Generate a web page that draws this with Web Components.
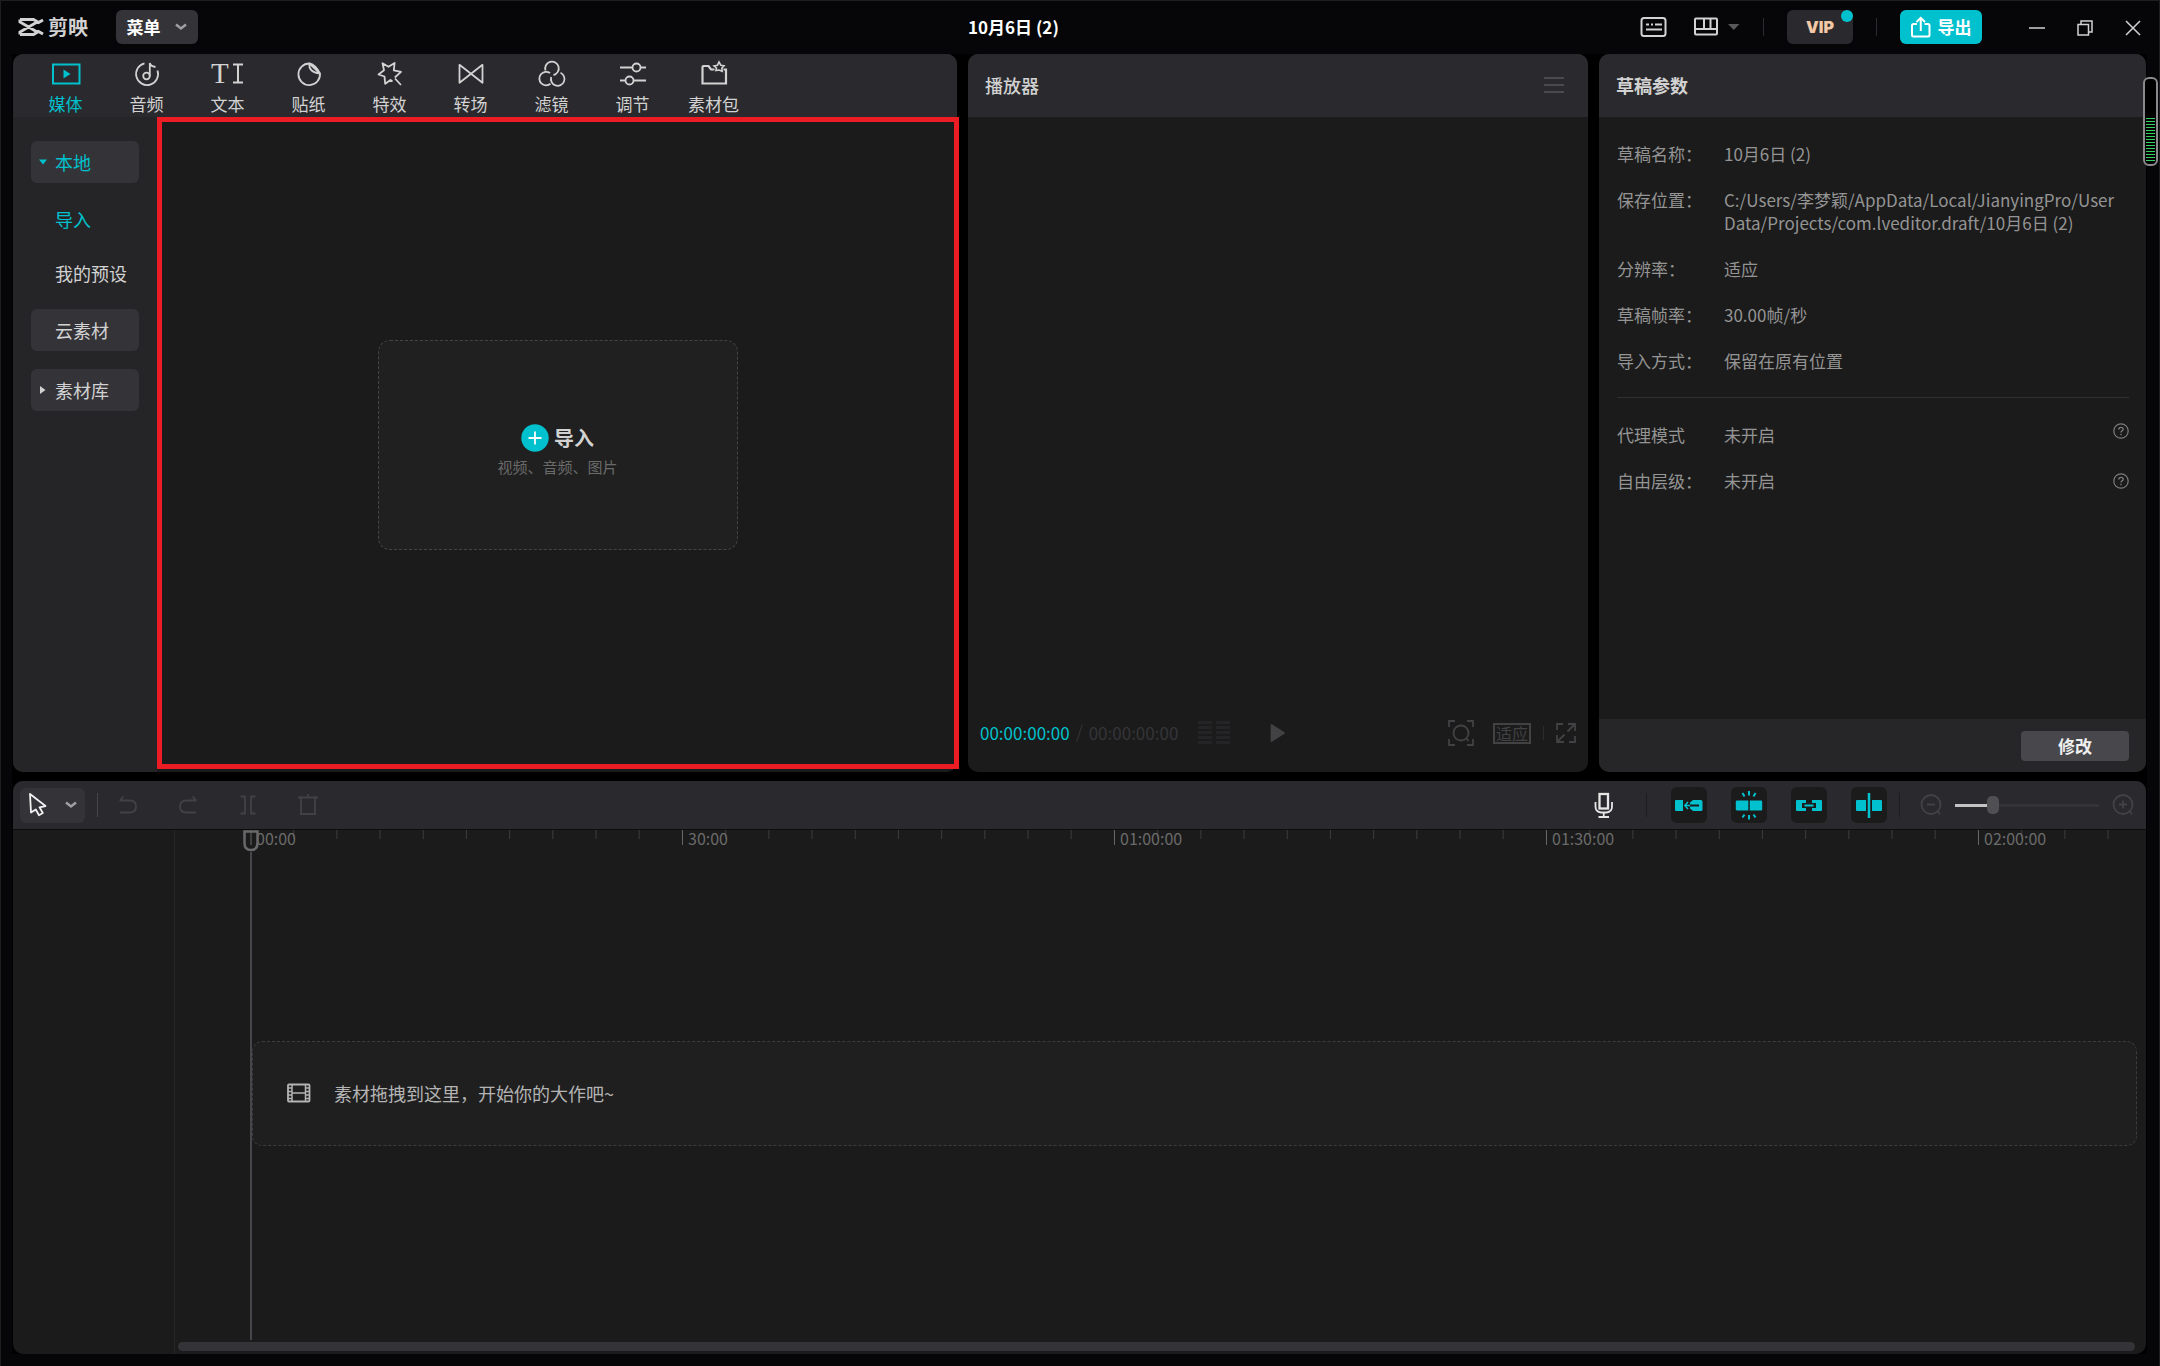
<!DOCTYPE html>
<html lang="zh-CN">
<head>
<meta charset="utf-8">
<title>剪映 - 10月6日 (2)</title>
<style>
  html, body { height: 100%; }
  body {
    margin: 0;
    background: #060608;
    --accent: #00c1cd;
    --head: #2a2a2e;
    --panel: #1b1b1b;
    --chip: #343338;
    --text: #d2d2d2;
    --muted: #949494;
    --dim: #424245;
    color: var(--text);
    font: 17px/22px "Noto Sans CJK SC", "Open Sans", sans-serif;
  }
</style>
</head>
<body>
<jy-app></jy-app>
<script>
const RESET = `
  *, *::before, *::after { box-sizing: border-box; }
  button { font: inherit; color: inherit; background: none; border: 0; padding: 0; margin: 0;
    display: inline-flex; align-items: center; justify-content: center; cursor: pointer; }
  jy-icon { flex: none; }
`;
function define(name, css, html, setup) {
  const tpl = document.createElement('template');
  tpl.innerHTML = `<style>${RESET}${css}</style>${html}`;
  customElements.define(name, class extends HTMLElement {
    connectedCallback() {
      if (this.shadowRoot) return;
      this.attachShadow({ mode: 'open' }).append(tpl.content.cloneNode(true));
      if (setup) setup(this, this.shadowRoot);
    }
  });
}

/* Icon set: [width, height, markup]; strokes use currentColor */
const ICONS = {
  logo: [26, 22, `<path d="M2 3.5H15.5L20.500 6.500 25 4M2 3.500V6L20 16.500M2 18.500H15.500L20.500 15.500 25 18M2 18.500V16L20 5.500" stroke-width="3"/>`],
  chevron: [14, 8, `<path d="M2 1.500 7 5.500 12 1.500" stroke-width="2.500"/>`],
  captions: [28, 22, `<rect x="1.500" y="2" width="24" height="18" rx="2.500" stroke-width="2"/><path d="M6 8.500h3M11 8.500h2M15 8.500h7M6 13.500h16" stroke-width="2"/>`],
  layout: [24, 20, `<rect x="1" y="1.500" width="22" height="16" rx="1" stroke-width="2"/><path d="M1 12H23M10 2V12M16.500 2V12" stroke-width="2"/>`],
  caret: [12, 8, `<path d="M0 1H11.500L5.750 7z" fill="currentColor" stroke="none"/>`],
  share: [20, 22, `<path d="M6 8H2.500Q1 8 1 9.500V19Q1 20.500 2.500 20.500H17Q18.500 20.500 18.500 19V9.500Q18.500 8 17 8H13.500M9.750 15V2M5.500 6 9.750 1.800 14 6" stroke-width="2"/>`],
  min: [16, 16, `<path d="M0 8H16" stroke-width="1.500"/>`],
  restore: [16, 16, `<path d="M1 4.500H11.500V15H1zM4 4.500V1H15V12H11.500" stroke-width="1.500"/>`],
  close: [16, 16, `<path d="M1 1 15 15M15 1 1 15" stroke-width="1.500"/>`],
  media: [30, 28, `<rect x="2" y="4.500" width="26.500" height="19" stroke-width="2"/><path d="M12.500 9.500 19.500 14 12.500 18.500z" fill="currentColor" stroke="none"/>`],
  audio: [30, 28, `<path d="M12.500 3.300A11 11 0 1 0 25.500 10.500M17.800 16V3Q18.500 6.300 23.500 7"/><circle cx="14.500" cy="16" r="3.300"/>`],
  text: [34, 28, `<text x="0" y="23" font-family="Liberation Serif, serif" font-size="29" fill="currentColor" stroke="none">T</text><path d="M22 4.500H32M27 4.500V22.500M22 22.500H32" stroke-width="2"/>`],
  sticker: [30, 28, `<path d="M15.500 3.500A10.800 10.800 0 1 0 26 13.500L15.500 3.500Q14 12 26 13.500M15.500 3.500Q21 4.500 26 13.500"/>`],
  effects: [30, 28, `<path d="M19.800 17.500 26 11.800 18.800 10.300 19.600 3 13.500 6.800 7.500 3.300 9 10.300 3.500 14.500 9.500 16.500 10.200 23.800 15.500 20 17.500 21.500M20 18.500 26 25" stroke-linejoin="round"/>`],
  transition: [30, 28, `<path d="M3.500 4.800 26.500 22.800V4.800L3.500 22.800z" stroke-linejoin="round"/>`],
  filter: [30, 28, `<path d="M8.500 10.500A6.800 6.800 0 1 1 16.500 15M13 13A6.800 6.800 0 1 0 13.500 23.800M23.500 12.800A6.800 6.800 0 1 1 14.200 17"/>`],
  adjust: [30, 28, `<path d="M2 7.500H14.500M22.500 7.500H28M2 20.500H7.500M15.500 20.500H28"/><circle cx="18.500" cy="7.500" r="4"/><circle cx="11.500" cy="20.500" r="4"/>`],
  pack: [30, 28, `<path d="M15.500 9.500 12 9.500 9.500 6H4.500Q3.500 6 3.500 7V23.500H27V9.500H24.500" stroke-width="2.200"/><path d="M17 10.500 17.500 8 15 6 18.500 5.200 20 2 21.800 5.200 25 5.800 22.800 8.200 23.200 11.300 20 10z" stroke-width="1.600"/>`],
  down: [10, 8, `<path d="M1 1.500H9L5 6.500z" fill="currentColor" stroke="none"/>`],
  right: [10, 10, `<path d="M2 1 7.500 5 2 9z" fill="currentColor" stroke="none"/>`],
  plus: [28, 28, `<circle cx="14" cy="14" r="13.700" fill="#00c1cd" stroke="none"/><path d="M7.500 14H20.500M14 7.500V20.500" stroke="#fff"/>`],
  menu: [20, 18, `<path d="M0 2H20M0 9H20M0 16H20"/>`],
  bars: [32, 24, `<path d="M0 1.500H14M18 1.500H32M0 6.500H14M18 6.500H32M0 11.500H14M18 11.500H32M0 16.500H14M18 16.500H32M0 21.500H14M18 21.500H32" stroke-width="3"/>`],
  play: [16, 20, `<path d="M1.500 2 14 10 1.500 18z" fill="currentColor" stroke-linejoin="round"/>`],
  focus: [26, 30, `<path d="M1 9V3H7M19 3H25V9M1 21V27H7M19 27H25V21M18 20 20.500 23"/><circle cx="13" cy="15" r="7.500"/>`],
  full: [20, 20, `<path d="M1 7V1H7M12 1H19V8M19 1 11.500 8.500M1 12V19H8M1 19 8.500 11.500M13 19H19V13"/>`],
  help: [16, 16, `<circle cx="8" cy="8" r="7.200" stroke-width="1.200"/><path d="M5.800 6.500Q5.800 4.300 8 4.300T10.200 6.300Q10.200 7.300 9 7.900 8 8.400 8 9.600M8 10.800V12.200" stroke-width="1.300"/>`],
  cursor: [20, 26, `<path d="M2 2 17.500 14 11.500 15.300 14.800 21 11 23.200 7.800 17.500 3 20.500z" stroke-linejoin="round"/>`],
  undo: [18, 20, `<path d="M.500 5.500H10.500Q17 5.500 17 11.500 17 17.500 10.500 17.500H1M4.500 1.500.800 5.500"/>`],
  redo: [18, 20, `<path d="M17.500 5.500H7.500Q1 5.500 1 11.500 1 17.500 7.500 17.500H17M13.500 1.500 17.200 5.500"/>`],
  split: [16, 20, `<path d="M.500 1.500H5V18.500H.500M15.500 1.500H11V18.500H15.500"/>`],
  trash: [20, 22, `<path d="M0 3.500H20M10 0V3.500M3 3.500V20H17V3.500"/>`],
  mic: [20, 26, `<rect x="5.500" y="2" width="8.500" height="14.500" stroke-width="2.300"/><path d="M1.500 10V14.500Q1.500 20 7 20.500H12.500Q18 20 18 14.500V10M9.750 20.500V24.500M4.500 25H15"/>`],
  snap: [30, 28, `<path d="M2 9H9V20H2Q1 20 1 19V10Q1 9 2 9zM16 11.500 19 9H27Q28.500 9 28.500 10.500V18.500Q28.500 20 27 20H19L16 17.500V15.500H25V13.500H16z" fill="currentColor" stroke="none"/><path d="M16 14.500H11M14 11 10.800 14.500 14 18" stroke-width="1.500"/>`],
  burst: [30, 30, `<path d="M3 10.500H14.300V20.500H3Q1.800 20.500 1.800 19.500V11.500Q1.800 10.500 3 10.500zM15.800 10.500H27Q28.200 10.500 28.200 11.500V19.500Q28.200 20.500 27 20.500H15.800z" fill="currentColor" stroke="none"/><path d="M15 1V5.500M15 25V29.500M8.500 3 10.500 6.500M21.500 3 19.500 6.500M8.500 27.500 10.500 24.500M21.500 27.500 19.500 24.500" stroke-width="2"/>`],
  link: [30, 28, `<path d="M3 9H12V12H8V17H12V20H3Q2 20 2 19V10Q2 9 3 9zM18 9H27Q28 9 28 10V19Q28 20 27 20H18V17H22V12H18z" fill="currentColor" stroke="none"/><path d="M10.500 14.500H19.500"/>`],
  align: [30, 28, `<path d="M3 9H12V20H3Q2 20 2 19V10Q2 9 3 9zM18 9H27Q28 9 28 10V19Q28 20 27 20H18z" fill="currentColor" stroke="none"/><path d="M15 2V27" stroke-width="2.500"/>`],
  zoomout: [22, 24, `<circle cx="11" cy="11.500" r="9.500"/><path d="M7 11.500H15M17 18 20 21"/>`],
  zoomin: [22, 24, `<circle cx="11" cy="11.500" r="9.500"/><path d="M7 11.500H15M11 7.500V15.500M17 18 20 21"/>`],
  film: [24, 20, `<rect x="1" y="1.500" width="21.500" height="17" rx="1"/><path d="M5 1.500V18.500M18.500 1.500V18.500M5 10H18.500M1 5H5M1 8.500H5M1 12H5M1 15.500H5M18.500 5H22.500M18.500 8.500H22.500M18.500 12H22.500M18.500 15.500H22.500" stroke-width="1.500"/>`],
  head: [16, 22, `<path d="M1.500 1.500H14.500V13Q14.500 20 8 20 1.500 20 1.500 13z" stroke-width="2.500" fill="#1b1b1b"/><path d="M8 2V15" stroke-width="1"/>`]
};
define('jy-icon', `:host { display: inline-flex; } svg { display: block; }`, ``, (host, root) => {
  const [w, h, body] = ICONS[host.getAttribute('name')];
  root.innerHTML += `<svg width="${w}" height="${h}" viewBox="0 0 ${w} ${h}" fill="none" stroke="currentColor" stroke-width="1.800" aria-hidden="true">${body}</svg>`;
});

define('jy-titlebar', `
  :host { display: grid; grid-template-columns: var(--cols); column-gap: 11px; align-items: center; height: 53px; padding: 0 13px 2px 12px; }
  .left, .right { display: flex; align-items: center; }
  .left { padding-left: 5px; }
  .brand { display: flex; align-items: center; gap: 4px; font-size: 20px; font-weight: 700; }
  .menu { margin-left: 28px; width: 82px; height: 34px; border-radius: 6px; background: var(--chip); color: #fff; font-weight: 700; gap: 13px; }
  .menu jy-icon { color: #a0a0a0; }
  h1 { margin: 0; font-size: 17px; line-height: 22px; font-weight: 700; color: #fff; }
  .right { justify-content: flex-end; padding-right: 5px; white-space: nowrap; }
  .layout { margin-left: 26px; gap: 10px; }
  .layout jy-icon + jy-icon { color: #58585a; }
  .sep { width: 1px; height: 18px; background: #2c2c30; margin: 0 23px; }
  .vip { position: relative; width: 66px; height: 34px; border-radius: 6px; background: #2a2a2e; color: #f3c8a6; font: 900 16px/20px Inter, sans-serif; }
  .vip i { position: absolute; top: 0; right: 0; width: 12px; height: 12px; border-radius: 50%; background: var(--accent); }
  .export { width: 82px; height: 34px; border-radius: 6px; background: var(--accent); color: #fff; font-weight: 700; gap: 7px; }
  .win { display: flex; gap: 32px; margin-left: 47px; padding-top: 2px; }
`, `
  <div class="left"><span class="brand"><jy-icon name="logo"></jy-icon>剪映</span>
    <button class="menu">菜单<jy-icon name="chevron"></jy-icon></button></div>
  <h1>10月6日 (2)</h1>
  <div class="right">
    <button aria-label="字幕"><jy-icon name="captions"></jy-icon></button>
    <button class="layout" aria-label="布局"><jy-icon name="layout"></jy-icon><jy-icon name="caret"></jy-icon></button>
    <span class="sep"></span>
    <button class="vip">VIP<i></i></button>
    <span class="sep"></span>
    <button class="export"><jy-icon name="share"></jy-icon>导出</button>
    <span class="win"><button aria-label="最小化"><jy-icon name="min"></jy-icon></button><button aria-label="还原"><jy-icon name="restore"></jy-icon></button><button aria-label="关闭"><jy-icon name="close"></jy-icon></button></span>
  </div>
`);

define('jy-tab', `
  :host { display: block; width: 81px; }
  button { width: 100%; flex-direction: column; gap: 5px; white-space: nowrap; }
  :host([active]) { color: var(--accent); }
`, `<button><slot></slot></button>`, (host, root) => {
  const icon = document.createElement('jy-icon');
  icon.setAttribute('name', host.getAttribute('icon'));
  root.querySelector('button').prepend(icon);
});

define('jy-nav-item', `
  :host { display: block; font-size: 18px; }
  button { width: 100%; height: 54px; justify-content: flex-start; border-radius: 6px; }
  .mark { width: 24px; display: flex; justify-content: center; }
  :host([group]) button { height: 42px; background: var(--chip); }
  :host([active]) { color: var(--accent); }
`, `<button><span class="mark"><slot name="mark"></slot></span><slot></slot></button>`);

define('jy-media', `
  :host { display: flex; flex-direction: column; background: var(--panel); border-radius: 10px; overflow: hidden; }
  nav { display: flex; height: 63px; padding: 6px 0 0 12px; background: var(--head); }
  .body { flex: 1; display: flex; min-height: 0; }
  aside { width: 144px; padding: 24px 18px; background: #252527; }
  .sub { padding: 9px 0; }
  .lib { margin-top: 18px; }
  main { flex: 1; display: flex; align-items: center; justify-content: center; padding: 1px 0 0 1px; }
  .drop { width: 360px; height: 210px; border: 1px dashed #444; border-radius: 12px; background: #202020; flex-direction: column; gap: 4px; padding-top: 12px; }
  .drop b { display: flex; align-items: center; gap: 5px; font-size: 20px; line-height: 28px; }
  .drop small { font-size: 15px; color: #6a6a6a; }
`, `
  <nav>
    <jy-tab icon="media" active>媒体</jy-tab><jy-tab icon="audio">音频</jy-tab><jy-tab icon="text">文本</jy-tab>
    <jy-tab icon="sticker">贴纸</jy-tab><jy-tab icon="effects">特效</jy-tab><jy-tab icon="transition">转场</jy-tab>
    <jy-tab icon="filter">滤镜</jy-tab><jy-tab icon="adjust">调节</jy-tab><jy-tab icon="pack">素材包</jy-tab>
  </nav>
  <div class="body">
    <aside>
      <jy-nav-item group active><jy-icon slot="mark" name="down"></jy-icon>本地</jy-nav-item>
      <div class="sub"><jy-nav-item active>导入</jy-nav-item><jy-nav-item>我的预设</jy-nav-item></div>
      <jy-nav-item group>云素材</jy-nav-item>
      <jy-nav-item class="lib" group><jy-icon slot="mark" name="right"></jy-icon>素材库</jy-nav-item>
    </aside>
    <main><button class="drop"><b><jy-icon name="plus"></jy-icon>导入</b><small>视频、音频、图片</small></button></main>
  </div>
`);

define('jy-panel', `
  :host { display: flex; flex-direction: column; background: var(--panel); border-radius: 10px; overflow: hidden; min-width: 0; }
  header { display: flex; align-items: center; justify-content: space-between; height: 63px; padding: 0 24px 2px 17px; background: var(--head); }
  h2 { margin: 0; font-size: 18px; line-height: 24px; font-weight: 500; }
  :host([strong]) h2 { font-weight: 700; }
  .body { flex: 1; display: flex; flex-direction: column; min-height: 0; }
`, `<header><h2></h2><slot name="action"></slot></header><div class="body"><slot></slot></div>`, (host, root) => {
  root.querySelector('h2').textContent = host.getAttribute('heading');
});

define('jy-player', `
  :host { display: flex; min-width: 0; }
  jy-panel { flex: 1; }
  .action { color: #4b4b4f; }
  .screen { flex: 1; }
  .bar { display: grid; grid-template-columns: 1fr auto 1fr; align-items: center; height: 78px; padding: 0 12px; color: var(--dim); }
  .time, .tools { display: flex; align-items: center; }
  .time { color: #353538; }
  .time b { font-weight: 400; color: var(--accent); }
  .time i { width: 1px; height: 18px; background: currentColor; transform: rotate(18deg); margin: 0 9px; }
  .time jy-icon { margin-left: 20px; color: #242426; }
  .tools { justify-content: flex-end; }
  .fit { width: 38px; height: 21px; border: 2px solid; font-size: 16px; line-height: 16px; margin-left: 19px; }
  .sep { width: 1px; height: 14px; background: #2c2c30; margin: 0 12px; }
`, `
  <jy-panel heading="播放器">
    <button class="action" slot="action" aria-label="菜单"><jy-icon name="menu"></jy-icon></button>
    <div class="screen"></div>
    <div class="bar">
      <div class="time"><b>00:00:00:00</b><i></i><span>00:00:00:00</span><jy-icon name="bars"></jy-icon></div>
      <button aria-label="播放"><jy-icon name="play"></jy-icon></button>
      <div class="tools"><button aria-label="缩放"><jy-icon name="focus"></jy-icon></button><button class="fit">适应</button><span class="sep"></span><button aria-label="全屏"><jy-icon name="full"></jy-icon></button></div>
    </div>
  </jy-panel>
`);

define('jy-field', `
  :host { display: flex; line-height: 23px; color: var(--muted); }
  .label { flex: none; width: 107px; }
  .value { flex: 1; min-width: 0; }
`, `<span class="label"></span><span class="value"><slot></slot></span><slot name="help"></slot>`, (host, root) => {
  root.querySelector('.label').textContent = host.getAttribute('label');
});

define('jy-params', `
  :host { display: flex; min-width: 0; }
  jy-panel { flex: 1; }
  .list { flex: 1; display: flex; flex-direction: column; gap: 23px; padding: 25px 17px 25px 18px; }
  hr { width: 100%; height: 1px; border: 0; margin: 2px 0; background: #303032; }
  .help { color: #7c7c7c; align-self: flex-start; }
  .mid { align-self: center; }
  footer { display: flex; justify-content: flex-end; align-items: center; height: 53px; padding: 0 17px; background: #262628; }
  footer button { width: 108px; height: 30px; border-radius: 4px; background: #47474c; color: #f0f0f0; font-weight: 700; }
`, `
  <jy-panel heading="草稿参数" strong>
    <div class="list">
      <jy-field label="草稿名称：">10月6日 (2)</jy-field>
      <jy-field label="保存位置：">C:/Users/李梦颖/AppData/Local/JianyingPro/User Data/Projects/com.lveditor.draft/10月6日 (2)</jy-field>
      <jy-field label="分辨率：">适应</jy-field>
      <jy-field label="草稿帧率：">30.00帧/秒</jy-field>
      <jy-field label="导入方式：">保留在原有位置</jy-field>
      <hr>
      <jy-field label="代理模式">未开启<button class="help" slot="help" aria-label="说明"><jy-icon name="help"></jy-icon></button></jy-field>
      <jy-field label="自由层级：">未开启<button class="help mid" slot="help" aria-label="说明"><jy-icon name="help"></jy-icon></button></jy-field>
    </div>
    <footer><button>修改</button></footer>
  </jy-panel>
`);

define('jy-toolbar', `
  :host { display: flex; align-items: center; justify-content: space-between; height: 49px; padding: 0 12px 0 7px; background: var(--head); border-bottom: 1px solid #0c0c0d; }
  div { display: flex; align-items: center; }
  .pick { width: 65px; height: 35px; border-radius: 6px; background: var(--chip); color: #f0f0f0; gap: 16px; }
  .pick jy-icon + jy-icon { color: #a0a0a0; }
  .sep { width: 1px; height: 24px; background: #46464a; }
  .sep.first { margin-left: 12px; }
  .sep.dark { background: #1d1d20; }
  .edit button { width: 60px; color: var(--dim); }
  .mic { color: #e6e6e6; margin-right: 32px; }
  .toggles { gap: 24px; margin: 0 12px 0 24px; }
  .toggles button { width: 36px; height: 36px; border-radius: 6px; background: #1b1b1c; color: var(--accent); }
  .zoom { gap: 13px; margin-left: 20px; color: var(--dim); }
  input { appearance: none; width: 144px; height: 18px; margin: 0; background: linear-gradient(to right, #c4c4c4 24%, #343438 24%) center / 100% 3px no-repeat; }
  input::-webkit-slider-thumb { appearance: none; width: 12px; height: 18px; border-radius: 5px; background: #505052; }
`, `
  <div>
    <button class="pick" aria-label="选择"><jy-icon name="cursor"></jy-icon><jy-icon name="chevron"></jy-icon></button>
    <span class="sep first"></span>
    <div class="edit"><button aria-label="撤销"><jy-icon name="undo"></jy-icon></button><button aria-label="恢复"><jy-icon name="redo"></jy-icon></button><button aria-label="分割"><jy-icon name="split"></jy-icon></button><button aria-label="删除"><jy-icon name="trash"></jy-icon></button></div>
  </div>
  <div>
    <button class="mic" aria-label="录音"><jy-icon name="mic"></jy-icon></button><span class="sep dark"></span>
    <div class="toggles"><button aria-label="主轨磁吸"><jy-icon name="snap"></jy-icon></button><button aria-label="自动吸附"><jy-icon name="burst"></jy-icon></button><button aria-label="联动"><jy-icon name="link"></jy-icon></button><button aria-label="预览轴"><jy-icon name="align"></jy-icon></button></div>
    <span class="sep dark"></span>
    <div class="zoom"><button aria-label="缩小"><jy-icon name="zoomout"></jy-icon></button><input type="range" min="0" max="100" value="24" aria-label="时间线缩放"><button aria-label="放大"><jy-icon name="zoomin"></jy-icon></button></div>
  </div>
`);

define('jy-ruler', `
  :host { display: flex; height: 24px; min-width: 0; font-size: 16px; line-height: 17px; color: #6a6a6a; }
  span { flex: none; width: 432px; background: linear-gradient(to right, #3c3c3f 1px, transparent 1px) 0 0 / 10% 9px repeat-x; }
  span::before { content: ""; display: inline-block; width: 1px; height: 15px; margin-right: 5px; background: #66666a; vertical-align: top; }
`, `<span>00:00</span><span>30:00</span><span>01:00:00</span><span>01:30:00</span><span>02:00:00</span>`);

define('jy-timeline', `
  :host { display: flex; flex-direction: column; background: var(--panel); border-radius: 10px; overflow: hidden; }
  .body { flex: 1; display: flex; min-height: 0; }
  .heads { width: 162px; border-right: 1px solid #262627; }
  .lanes { position: relative; flex: 1; min-width: 0; display: flex; flex-direction: column; padding-bottom: 3px; }
  jy-ruler { margin-left: 75px; }
  .track { flex: 1; display: flex; align-items: center; padding: 0 9px 10px 77px; }
  .drop { flex: 1; display: flex; align-items: center; gap: 23px; height: 105px; padding-left: 34px; border: 1px dashed #3c3c3d; border-radius: 10px; background: #1f1f1f; font-size: 18px; color: #b4b4b4; }
  .scroll { height: 9px; margin: 0 11px 0 3px; border-radius: 5px; background: #343338; }
  .playhead { position: absolute; top: 0; bottom: 14px; left: 68px; width: 16px; display: flex; flex-direction: column; align-items: center; color: #69696c; }
  .playhead::after { content: ""; flex: 1; width: 2px; background: #46464c; }
`, `
  <jy-toolbar></jy-toolbar>
  <div class="body">
    <div class="heads"></div>
    <div class="lanes">
      <jy-ruler></jy-ruler>
      <div class="track"><div class="drop"><jy-icon name="film"></jy-icon>素材拖拽到这里，开始你的大作吧~</div></div>
      <div class="scroll"></div>
      <div class="playhead"><jy-icon name="head"></jy-icon></div>
    </div>
  </div>
`);

define('jy-level', `
  :host { display: block; box-sizing: border-box; width: 15px; height: 89px; padding: 39px 1px 3px; border: 2px solid #8a8a8c; border-radius: 6px; background: #000; }
  div { height: 100%; background: repeating-linear-gradient(to bottom, #35d160 0 1px, transparent 1px 3px); }
`, `<div></div>`);

define('jy-app', `
  :host { --cols: minmax(0, 944fr) minmax(0, 620fr) minmax(0, 547fr); position: relative; display: flex; flex-direction: column; height: 100vh; box-sizing: border-box; border: 1px solid #1e1e20; border-bottom: 0; }
  .work { flex: 1; display: flex; flex-direction: column; gap: 9px; min-height: 0; margin: 0 12px 12px 11px; padding: 0 1px; background: #000; }
  .top { flex: 718; min-height: 0; display: grid; grid-template-columns: var(--cols); column-gap: 11px; }
  jy-timeline { flex: 573; min-height: 0; }
  .mark { position: absolute; left: 156px; top: 116px; right: 1200px; bottom: 597px; border: 5px solid #ec1c24; pointer-events: none; }
  jy-level { position: absolute; top: 76px; right: 1px; }
`, `
  <jy-titlebar></jy-titlebar>
  <div class="work">
    <div class="top"><jy-media></jy-media><jy-player></jy-player><jy-params></jy-params></div>
    <jy-timeline></jy-timeline>
  </div>
  <div class="mark"></div>
  <jy-level></jy-level>
`);
</script>
</body>
</html>
